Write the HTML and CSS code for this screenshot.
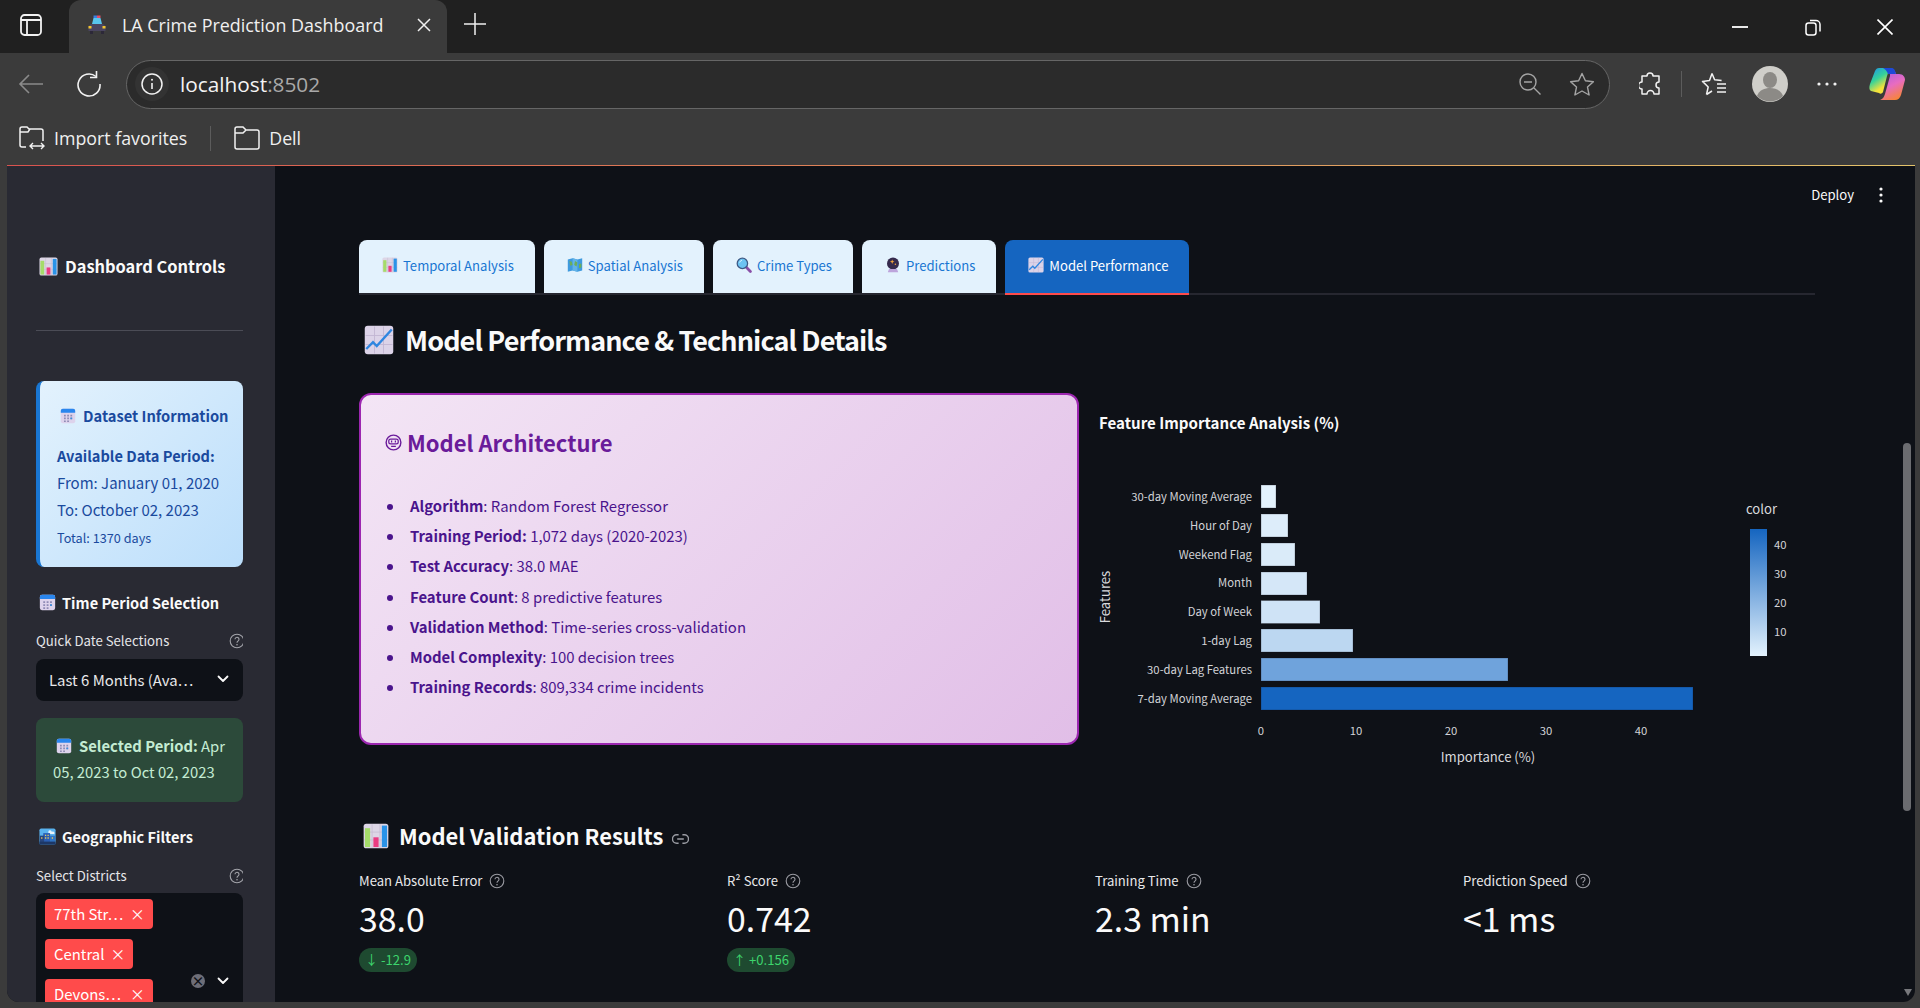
FILE: index.html
```html
<!DOCTYPE html>
<html lang="en">
<head>
  <meta charset="UTF-8">
  <title>LA Crime Prediction Dashboard</title>
  <link rel="stylesheet" href="styles.css">
</head>
<body>
  <!-- shared emoji drawings -->
  <svg class="defs" width="0" height="0">
    <symbol id="e-chart" viewBox="0 0 20 20">
      <rect x="0.5" y="0.5" width="19" height="19" rx="2" fill="#ddd6e6"/>
      <path d="M7 1v18M13 1v18M1 7h18M1 13h18" stroke="#c6bdd2" stroke-width=".6"/>
      <rect x="1.5" y="4" width="4" height="14.5" fill="#a5dc6a"/>
      <rect x="8" y="11" width="4" height="7.5" fill="#ea3c82"/>
      <rect x="14.5" y="2" width="4" height="16.5" fill="#2a93e8"/>
    </symbol>
    <symbol id="e-cal" viewBox="0 0 20 20">
      <rect x="1" y="1" width="18" height="18" rx="2.5" fill="#ddd3ec"/>
      <path d="M1 6V3.5A2.5 2.5 0 0 1 3.500 1h13A2.500 2.500 0 0 1 19 3.500V6z" fill="#2a86ee"/>
      <path d="M5 8.500h2.200v2H5zM9 8.500h2.200v2H9zM13 8.500h2.200v2H13zM5 12h2.200v2H5zM9 12h2.200v2H9zM13 12h2.200v2H13zM5 15.500h2.200v2H5zM9 15.500h2.200v2H9z" fill="#8f8bb5"/>
      <path d="M13 12h2.200v2H13z" fill="#3b8fe0"/>
    </symbol>
    <symbol id="e-city" viewBox="0 0 20 20">
      <rect x="0.500" y="0.500" width="19" height="19" rx="2" fill="#59b2ee"/>
      <path d="M11 5a2 2 0 0 1 4-.5 2 2 0 0 1 3 2.500h-7z" fill="#e6f3fb"/>
      <rect x="5" y="6" width="8" height="11" fill="#2b5fb5"/>
      <rect x="1" y="9" width="5" height="8" fill="#27467f"/>
      <rect x="13" y="9" width="6" height="8" fill="#2f74c4"/>
      <rect x="0.500" y="16" width="19" height="3.500" fill="#1d3766"/>
      <path d="M7 8h1.500v1.500H7zM10 8h1.500v1.500H10zM7 11h1.500v1.500H7zM10 11h1.500v1.500H10zM2.500 11H4v1.500H2.500zM15 11h1.500v1.500H15z" fill="#e7c95a"/>
    </symbol>
    <symbol id="e-map" viewBox="0 0 20 20">
      <path d="M1 3l6-1.500 6 1.500 6-1.500v15.500l-6 1.500-6-1.500-6 1.500z" fill="#3f9ade"/>
      <path d="M7 1.500v15.500l6 1.500V3z" fill="#62b3e8"/>
      <path d="M3 5l3 1 1 4-3 1zM10 5l3 2-1 5-3-2zM15 9l3-1v5l-3 1z" fill="#6cae5a"/>
    </symbol>
    <symbol id="e-search" viewBox="0 0 20 20">
      <path d="M12 12l6 6" stroke="#8a4fa8" stroke-width="3.500" stroke-linecap="round"/>
      <circle cx="8" cy="8" r="6.500" fill="#6cc3f2" stroke="#3d5a86" stroke-width="1.600"/>
      <path d="M4.500 7a4 4 0 0 1 3-3" stroke="#d8f1fd" stroke-width="1.200" fill="none"/>
    </symbol>
    <symbol id="e-ball" viewBox="0 0 20 20">
      <circle cx="10" cy="8" r="7.500" fill="#352a4d"/>
      <path d="M9 3l.8 2 2 .8-2 .8-.8 2-.8-2-2-.8 2-.8z" fill="#f2a33c"/>
      <circle cx="13" cy="9" r="1" fill="#f2a33c"/>
      <path d="M5 15h10l1.500 4h-13z" fill="#bda5dc"/>
    </symbol>
    <symbol id="e-line" viewBox="0 0 20 20">
      <rect x="0.500" y="0.500" width="19" height="19" rx="2" fill="#dcd3e8"/>
      <path d="M7 1v18M13 1v18M1 7h18M1 13h18" stroke="#c2b6d3" stroke-width=".6"/>
      <path d="M1.500 16l4.500-4.500 2.500 2.500 10-11" stroke="#2f86e0" stroke-width="1.600" fill="none"/>
    </symbol>
    <symbol id="i-help" viewBox="0 0 16 16">
      <circle cx="8" cy="8" r="6.800" fill="none" stroke="currentColor" stroke-width="1.100"/>
      <path d="M6 6.300a2 2 0 1 1 3.200 1.600c-.8.600-1.200 1-1.200 1.900" fill="none" stroke="currentColor" stroke-width="1.100"/>
      <circle cx="8" cy="11.700" r=".8" fill="currentColor"/>
    </symbol>
    <symbol id="i-chev" viewBox="0 0 12 8">
      <path d="M1.500 1.500L6 6l4.500-4.500" fill="none" stroke="currentColor" stroke-width="1.800" stroke-linecap="round" stroke-linejoin="round"/>
    </symbol>
  </svg>

  <!-- browser chrome -->
  <div class="tabstrip">
    <svg class="ic-panel" viewBox="0 0 22 22"><rect x="1" y="1" width="20" height="20" rx="3.500" fill="none" stroke="#f2f2f2" stroke-width="1.800"/><path d="M1 6h20M7 6v15" stroke="#f2f2f2" stroke-width="1.800"/></svg>
    <div class="browser-tab">
      <svg class="favicon" viewBox="0 0 20 20">
        <path d="M5 9l1.500-6h7L15 9z" fill="#59c6ee"/>
        <rect x="6.500" y="0.500" width="3.500" height="2.500" fill="#3b7fe0"/><rect x="10" y="0.500" width="3.500" height="2.500" fill="#e0506a"/>
        <path d="M1.500 11l2.500-2h12l2.500 2v5h-17z" fill="#4a4560"/>
        <rect x="1.500" y="11" width="3" height="2.500" fill="#f2c52e"/><rect x="15.500" y="11" width="3" height="2.500" fill="#f2c52e"/>
        <rect x="3" y="16" width="3" height="3" fill="#2c2838"/><rect x="14" y="16" width="3" height="3" fill="#2c2838"/>
      </svg>
      <span class="tab-title">LA Crime Prediction Dashboard</span>
      <svg class="tab-x" viewBox="0 0 14 14"><path d="M1 1l12 12M13 1L1 13" stroke="#f0f0f0" stroke-width="1.500"/></svg>
    </div>
    <svg class="ic-plus" viewBox="0 0 22 22"><path d="M11 0v22M0 11h22" stroke="#f0f0f0" stroke-width="1.500"/></svg>
    <div class="win-btns">
      <svg class="win-min" viewBox="0 0 16 2"><path d="M0 1h16" stroke="#fff" stroke-width="1.800"/></svg>
      <svg class="win-max" viewBox="0 0 16 18"><rect x="1" y="5" width="10" height="12" rx="2.500" fill="none" stroke="#fff" stroke-width="1.500"/><path d="M5 2.500h6a4 4 0 0 1 4 4v7" fill="none" stroke="#fff" stroke-width="1.500"/></svg>
      <svg class="win-close" viewBox="0 0 16 16"><path d="M.5.5l15 15M15.500.5l-15 15" stroke="#fff" stroke-width="1.600"/></svg>
    </div>
  </div>

  <div class="toolbar">
    <svg class="ic-back" viewBox="0 0 26 22"><path d="M25 11H2M11 2l-9 9 9 9" fill="none" stroke="#8b8b8b" stroke-width="1.600"/></svg>
    <svg class="ic-reload" viewBox="0 0 26 26"><path d="M20 5.500A11 11 0 1 0 24 13" fill="none" stroke="#f2f2f2" stroke-width="1.600"/><path d="M20.500 0v6.500H14" fill="none" stroke="#f2f2f2" stroke-width="1.600"/></svg>
    <div class="address">
      <span class="info-wrap"><svg class="ic-info" viewBox="0 0 22 22"><circle cx="11" cy="11" r="10" fill="none" stroke="#f2f2f2" stroke-width="1.500"/><path d="M11 10v6" stroke="#f2f2f2" stroke-width="1.600"/><circle cx="11" cy="6.800" r="1" fill="#f2f2f2"/></svg></span>
      <span class="url">localhost<span class="url-port">:8502</span></span>
      <svg class="ic-zoom" viewBox="0 0 22 22"><circle cx="9" cy="9" r="8" fill="none" stroke="#a5a5a5" stroke-width="1.400"/><path d="M5 9h8M15 15l6.500 6.500" stroke="#a5a5a5" stroke-width="1.400"/></svg>
      <svg class="ic-star" viewBox="0 0 26 24"><path d="M13 1.500l3.400 7.300 8 .9-5.900 5.400 1.600 7.900-7.100-4-7.100 4 1.600-7.900L1.600 9.700l8-.9z" fill="none" stroke="#a5a5a5" stroke-width="1.400" stroke-linejoin="round"/></svg>
    </div>
    <svg class="ic-ext" viewBox="0 0 22 24"><path d="M8 4a3 3 0 0 1 6 0h6v6a3 3 0 0 0 0 6v6h-5a3.500 3.500 0 0 0-7 0H3v-5a3 3 0 0 1 0-7V4z" fill="none" stroke="#f2f2f2" stroke-width="1.500" stroke-linejoin="round"/></svg>
    <span class="tool-sep"></span>
    <svg class="ic-favs" viewBox="0 0 26 24"><path d="M11 1.500l2.600 6.300 7 .7M5.500 22.500L7.200 15 1.500 9.400l7-.9L11 1.500M5.500 22.500l5.500-3.500" fill="none" stroke="#f2f2f2" stroke-width="1.500" stroke-linejoin="round"/><path d="M16 12h9M16 16h9M16 20h9" stroke="#f2f2f2" stroke-width="1.500"/></svg>
    <svg class="ic-avatar" viewBox="0 0 36 36"><circle cx="18" cy="18" r="18" fill="#cfcec9"/><ellipse cx="18" cy="14" rx="7" ry="8" fill="#8c8a86"/><path d="M5 30c2-6 8-8 13-8s11 2 13 8a18 18 0 0 1-26 0z" fill="#8c8a86"/></svg>
    <svg class="ic-dots" viewBox="0 0 20 4"><circle cx="2" cy="2" r="1.600" fill="#f2f2f2"/><circle cx="10" cy="2" r="1.600" fill="#f2f2f2"/><circle cx="18" cy="2" r="1.600" fill="#f2f2f2"/></svg>
    <svg class="ic-copilot" viewBox="0 0 36 32">
      <defs>
        <linearGradient id="cp1" x1="0" y1="0" x2="0.600" y2="1"><stop offset="0" stop-color="#1b8ef0"/><stop offset=".45" stop-color="#35d29a"/><stop offset=".8" stop-color="#f4e23a"/></linearGradient>
        <linearGradient id="cp2" x1="0.200" y1="0" x2="0.600" y2="1"><stop offset="0" stop-color="#a35be8"/><stop offset=".55" stop-color="#e86cc0"/><stop offset="1" stop-color="#f7843a"/></linearGradient>
      </defs>
      <path d="M10 0h14c-3 1-5 4-6 8l-4 16c-1 2-3 2-4 1l-8-2C0 22 0 19 1 16L6 3c1-2 2-3 4-3z" fill="url(#cp1)"/>
      <path d="M22 1c3 0 4 2 5 5h3c4 0 6 3 6 6l-4 15c-1 3-3 5-6 5H11c3-1 4-3 5-6l5-18c0-3 0-6 1-7z" fill="url(#cp2)"/>
      <path d="M14 0h9c2 0 3 2 4 6h-8c-1-3-3-5-5-6z" fill="#1e49d8"/>
    </svg>
  </div>

  <div class="bookmarks">
    <svg class="ic-import" viewBox="0 0 26 24"><path d="M7 21H3a2 2 0 0 1-2-2V3a2 2 0 0 1 2-2h5l2 2h12a2 2 0 0 1 2 2v10" fill="none" stroke="#f2f2f2" stroke-width="1.500"/><path d="M1 6h8l2-3M11 20h14M14 17l-3 3 3 3M22 17l3 3-3 3" fill="none" stroke="#f2f2f2" stroke-width="1.400"/></svg>
    <span class="bm-label">Import favorites</span>
    <span class="bm-sep"></span>
    <svg class="ic-folder" viewBox="0 0 26 24"><path d="M3 1h6l3 3h11a2 2 0 0 1 2 2v15a2 2 0 0 1-2 2H3a2 2 0 0 1-2-2V3a2 2 0 0 1 2-2zM1 7h8l3-3" fill="none" stroke="#f2f2f2" stroke-width="1.500"/></svg>
    <span class="bm-label">Dell</span>
  </div>

  <!-- streamlit page -->
  <div class="page">
    <aside class="sidebar">
      <div class="side-inner">
        <h3 class="side-title"><svg class="emoji e19"><use href="#e-chart"/></svg>Dashboard Controls</h3>
        <hr class="side-hr">
        <div class="data-card">
          <div class="data-head"><svg class="emoji e16"><use href="#e-cal"/></svg>Dataset Information</div>
          <div class="data-line"><strong>Available Data Period:</strong></div>
          <div class="data-line">From: January 01, 2020</div>
          <div class="data-line">To: October 02, 2023</div>
          <div class="data-line data-small">Total: 1370 days</div>
        </div>

        <h4 class="side-sub first"><svg class="emoji e17"><use href="#e-cal"/></svg>Time Period Selection</h4>
        <div class="field-label">Quick Date Selections<svg class="help-clip"><use href="#i-help"/></svg></div>
        <div class="select-box">
          <span>Last 6 Months (Ava…</span>
          <svg class="chev"><use href="#i-chev"/></svg>
        </div>
        <div class="period-box">
          <svg class="emoji e16 period-ic"><use href="#e-cal"/></svg><strong>Selected Period:</strong> Apr 05, 2023 to Oct 02, 2023
        </div>

        <h4 class="side-sub geo"><svg class="emoji e17"><use href="#e-city"/></svg>Geographic Filters</h4>
        <div class="field-label">Select Districts<svg class="help-clip"><use href="#i-help"/></svg></div>
        <div class="multi-box">
          <div class="tags">
            <span class="tag wide">77th Str…<i>×</i></span>
            <span class="tag">Central<i>×</i></span>
            <span class="tag wide">Devons…<i>×</i></span>
          </div>
          <div class="multi-ctl">
            <span class="clear-x">×</span>
            <svg class="chev"><use href="#i-chev"/></svg>
          </div>
        </div>
      </div>
    </aside>

    <main class="main">
      <div class="app-head">
        <span>Deploy</span>
        <svg class="kebab" viewBox="0 0 4 16"><circle cx="2" cy="2" r="1.600" fill="#fafafa"/><circle cx="2" cy="8" r="1.600" fill="#fafafa"/><circle cx="2" cy="14" r="1.600" fill="#fafafa"/></svg>
      </div>

      <div class="tabs">
        <div class="tab"><svg class="emoji e16"><use href="#e-chart"/></svg>Temporal Analysis</div>
        <div class="tab"><svg class="emoji e16"><use href="#e-map"/></svg>Spatial Analysis</div>
        <div class="tab"><svg class="emoji e16"><use href="#e-search"/></svg>Crime Types</div>
        <div class="tab"><svg class="emoji e16"><use href="#e-ball"/></svg>Predictions</div>
        <div class="tab active"><svg class="emoji e16"><use href="#e-line"/></svg>Model Performance</div>
      </div>

      <h2 class="page-title"><svg class="emoji e30"><use href="#e-line"/></svg>Model Performance &amp; Technical Details</h2>

      <div class="two-col">
        <section class="arch-card">
          <h3>
            <svg class="robot" viewBox="0 0 18 18"><circle cx="9" cy="9" r="7.800" fill="none" stroke="#6a1b9a" stroke-width="1.500"/><rect x="4" y="5.500" width="10" height="5" rx="2" fill="none" stroke="#6a1b9a" stroke-width="1.300"/><path d="M7 7v2M11 7v2M6.500 13h5" stroke="#6a1b9a" stroke-width="1.300"/></svg>Model Architecture
          </h3>
          <ul>
            <li><strong>Algorithm</strong>: Random Forest Regressor</li>
            <li><strong>Training Period:</strong> 1,072 days (2020-2023)</li>
            <li><strong>Test Accuracy</strong>: 38.0 MAE</li>
            <li><strong>Feature Count</strong>: 8 predictive features</li>
            <li><strong>Validation Method</strong>: Time-series cross-validation</li>
            <li><strong>Model Complexity</strong>: 100 decision trees</li>
            <li><strong>Training Records</strong>: 809,334 crime incidents</li>
          </ul>
        </section>

        <svg class="chart" viewBox="1099 393 716 400">
          <defs>
            <linearGradient id="cbar" x1="0" y1="0" x2="0" y2="1"><stop offset="0" stop-color="#1565c0"/><stop offset="1" stop-color="#e3f2fd"/></linearGradient>
          </defs>
          <text class="c-title" x="1099" y="429">Feature Importance Analysis (%)</text>

          <g class="c-bars">
            <rect x="1261" y="485" width="15" height="23" fill="#e3f2fd"/>
            <rect x="1261" y="514" width="27" height="23" fill="#ddedfa"/>
            <rect x="1261" y="543" width="34" height="23" fill="#daebf9"/>
            <rect x="1261" y="572" width="46" height="23" fill="#d5e7f8"/>
            <rect x="1261" y="600.500" width="59" height="23" fill="#cfe3f6"/>
            <rect x="1261" y="629" width="92" height="23" fill="#bcd7f1"/>
            <rect x="1261" y="658" width="247" height="23" fill="#6fa3dc"/>
            <rect x="1261" y="687" width="432" height="23" fill="#1565c0"/>
          </g>

          <g class="c-tick" text-anchor="end">
            <text x="1252" y="501">30-day Moving Average</text>
            <text x="1252" y="530">Hour of Day</text>
            <text x="1252" y="559">Weekend Flag</text>
            <text x="1252" y="587">Month</text>
            <text x="1252" y="616">Day of Week</text>
            <text x="1252" y="645">1-day Lag</text>
            <text x="1252" y="674">30-day Lag Features</text>
            <text x="1252" y="703">7-day Moving Average</text>
          </g>
          <g class="c-tick" text-anchor="middle">
            <text x="1261" y="735">0</text>
            <text x="1356" y="735">10</text>
            <text x="1451" y="735">20</text>
            <text x="1546" y="735">30</text>
            <text x="1641" y="735">40</text>
          </g>
          <text class="c-axis" x="1488" y="762" text-anchor="middle">Importance (%)</text>
          <text class="c-axis" x="0" y="0" text-anchor="middle" transform="translate(1110 597) rotate(-90)">Features</text>

          <text class="c-axis" x="1746" y="514">color</text>
          <rect x="1750" y="529" width="17" height="127" fill="url(#cbar)"/>
          <g class="c-tick">
            <text x="1774" y="549">40</text>
            <text x="1774" y="578">30</text>
            <text x="1774" y="607">20</text>
            <text x="1774" y="636">10</text>
          </g>
        </svg>
      </div>

      <h3 class="section-title"><svg class="emoji e26"><use href="#e-chart"/></svg>Model Validation Results
        <svg class="ic-link" viewBox="0 0 18 12"><path d="M7 1.500H5a4.500 4.500 0 0 0 0 9h2M11 1.500h2a4.500 4.500 0 0 1 0 9h-2M5.500 6h7" fill="none" stroke="#9a9ca3" stroke-width="1.500"/></svg>
      </h3>

      <div class="metrics">
        <div class="metric">
          <div class="metric-label">Mean Absolute Error<svg class="help"><use href="#i-help"/></svg></div>
          <div class="metric-value">38.0</div>
          <span class="delta">↓ -12.9</span>
        </div>
        <div class="metric">
          <div class="metric-label">R² Score<svg class="help"><use href="#i-help"/></svg></div>
          <div class="metric-value">0.742</div>
          <span class="delta">↑ +0.156</span>
        </div>
        <div class="metric">
          <div class="metric-label">Training Time<svg class="help"><use href="#i-help"/></svg></div>
          <div class="metric-value">2.3 min</div>
        </div>
        <div class="metric">
          <div class="metric-label">Prediction Speed<svg class="help"><use href="#i-help"/></svg></div>
          <div class="metric-value">&lt;1 ms</div>
        </div>
      </div>

      <div class="scrollbar">
        <span class="scroll-thumb"></span>
        <svg class="scroll-arrow" viewBox="0 0 8 7"><path d="M0 0h8L4 7z" fill="#77787c"/></svg>
      </div>
    </main>
  </div>
</body>
</html>
```

FILE: styles.css
```css
* {
  box-sizing: border-box;
}
html, body {
  margin: 0;
  height: 1008px;
  overflow: hidden;
}
body {
  background: #3b3b3b;
  font-family: "Noto Sans CJK SC", "Noto Sans", sans-serif;
  color: #fafafa;
  display: flex;
  flex-direction: column;
}
svg {
  display: block;
  flex: none;
}
.defs {
  position: absolute;
}

/* browser chrome */
.tabstrip {
  height: 53px;
  background: #202020;
  display: flex;
  align-items: flex-start;
  flex: none;
}
.ic-panel {
  width: 22px;
  height: 22px;
  margin: 14px 27px 0 20px;
}
.browser-tab {
  width: 378px;
  height: 53px;
  background: #3b3b3b;
  border-radius: 12px 12px 0 0;
  display: flex;
  align-items: center;
  padding: 0 0 4px 18px;
}
.favicon {
  width: 20px;
  height: 20px;
}
.tab-title {
  font-family: "Open Sans", sans-serif;
  font-size: 17.900px;
  color: #f0f0f0;
  margin-left: 15px;
  width: 295px;
  white-space: nowrap;
}
.tab-x {
  width: 14px;
  height: 14px;
}
.ic-plus {
  width: 22px;
  height: 22px;
  margin: 13px 0 0 17px;
}
.win-btns {
  margin-left: auto;
  display: flex;
  align-items: center;
  height: 54px;
}
.win-min {
  width: 16px;
  height: 2px;
}
.win-max {
  width: 16px;
  height: 18px;
  margin-left: 57px;
}
.win-close {
  width: 16px;
  height: 16px;
  margin: 0 27px 0 56px;
}
.toolbar {
  height: 62px;
  flex: none;
  display: flex;
  align-items: center;
  padding-bottom: 0;
}
.ic-back {
  width: 26px;
  height: 22px;
  margin-left: 18px;
}
.ic-reload {
  width: 26px;
  height: 26px;
  margin-left: 32px;
}
.address {
  width: 1484px;
  height: 49px;
  margin-left: 24px;
  border: 1.500px solid #666;
  border-radius: 25px;
  background: #2b2b2b;
  display: flex;
  align-items: center;
  padding-left: 8px;
}
.info-wrap {
  width: 34px;
  height: 34px;
  border-radius: 50%;
  background: #333;
  display: flex;
  align-items: center;
  justify-content: center;
}
.ic-info {
  width: 22px;
  height: 22px;
}
.url {
  font-family: "Open Sans", sans-serif;
  font-size: 20.800px;
  color: #f4f4f4;
  margin-left: 11px;
}
.url-port {
  color: #a9a9a9;
}
.ic-zoom {
  width: 22px;
  height: 22px;
  margin-left: auto;
}
.ic-star {
  width: 26px;
  height: 24px;
  margin: 0 14px 0 28px;
}
.ic-ext {
  width: 22px;
  height: 24px;
  margin-left: 29px;
}
.tool-sep {
  width: 1px;
  height: 26px;
  background: #5c5c5c;
  margin-left: 20px;
}
.ic-favs {
  width: 26px;
  height: 24px;
  margin-left: 19px;
}
.ic-avatar {
  width: 36px;
  height: 36px;
  margin-left: 25px;
}
.ic-dots {
  width: 20px;
  height: 4px;
  margin-left: 29px;
}
.ic-copilot {
  width: 36px;
  height: 32px;
  margin-left: 32px;
}
.bookmarks {
  height: 50px;
  flex: none;
  display: flex;
  align-items: center;
  padding-left: 19px;
  padding-bottom: 4px;
}
.ic-import {
  width: 26px;
  height: 24px;
}
.bm-label {
  font-family: "Open Sans", sans-serif;
  font-size: 17.800px;
  color: #f0f0f0;
  margin-left: 9px;
}
.bm-sep {
  width: 1px;
  height: 25px;
  background: #5c5c5c;
  margin: 0 23px;
}
.ic-folder {
  width: 26px;
  height: 24px;
}

/* page */
.page {
  height: 837px;
  flex: none;
  margin: 0 5px 0 7px;
  border-top: 1px solid;
  border-image: linear-gradient(90deg, #d9534f, #e08a5a 50%, #e3c36b) 1;
  display: flex;
  overflow: hidden;
  border-radius: 0 0 12px 12px;
  background: #0e1117;
}
.sidebar {
  width: 268px;
  flex: none;
  background: #292a33;
  padding: 88px 0 0 29px;
  overflow: hidden;
}
.side-inner {
  width: 207px;
  overflow: hidden;
}
.emoji {
  display: inline-block;
  vertical-align: -2px;
}
.e16 { width: 16px; height: 16px; }
.e17 { width: 17px; height: 17px; }
.e19 { width: 19px; height: 19px; }
.e26 { width: 26px; height: 26px; }
.e30 { width: 30px; height: 30px; }
.side-title {
  margin: 0;
  font-size: 16.400px;
  line-height: 24px;
  font-weight: 600;
  white-space: nowrap;
  padding-left: 3px;
}
.side-title .emoji {
  margin-right: 7px;
  vertical-align: -3px;
}
.side-hr {
  border: 0;
  height: 1px;
  background: #4b4c56;
  margin: 52px 0 50px;
}
.data-card {
  height: 186px;
  border-left: 4px solid #1976d2;
  border-radius: 8px;
  background: linear-gradient(135deg, #e3f2fd, #bbdefb);
  padding: 23px 0 0 17px;
  color: #1a4a9e;
  font-size: 15px;
  white-space: nowrap;
}
.data-head {
  line-height: 24px;
  font-weight: 600;
  font-size: 14.700px;
  margin-left: 3px;
  margin-bottom: 14px;
}
.data-head .emoji {
  margin-right: 7px;
}
.data-line {
  line-height: 27px;
}
.data-line strong {
  font-weight: 600;
  font-size: 14.600px;
}
.data-small {
  font-size: 12.700px;
  line-height: 29px;
}
.side-sub {
  margin: 0;
  font-size: 14.600px;
  line-height: 24px;
  font-weight: 600;
  padding-left: 3px;
  white-space: nowrap;
}
.side-sub .emoji {
  margin-right: 6px;
}
.side-sub.first {
  margin-top: 24px;
}
.side-sub.geo {
  margin-top: 23px;
}
.field-label {
  font-size: 13.200px;
  line-height: 20px;
  margin-top: 16px;
  display: flex;
  justify-content: space-between;
  align-items: center;
  color: #e6e6e9;
}
.side-sub.geo + .field-label {
  margin-top: 17px;
}
.help-clip {
  width: 16px;
  height: 16px;
  margin-right: -2px;
  color: #a3a4aa;
}
.select-box {
  height: 42px;
  margin-top: 8px;
  background: #0e1117;
  border-radius: 8px;
  padding: 0 14px 2px 13px;
  font-size: 14.900px;
  color: #e8e8ea;
  display: flex;
  align-items: center;
  justify-content: space-between;
  white-space: nowrap;
}
.chev {
  width: 12px;
  height: 8px;
  color: #fafafa;
}
.period-box {
  height: 84px;
  margin-top: 17px;
  padding: 15px 8px 0 17px;
  background: #2c4a3a;
  border-radius: 8px;
  color: #c4ecd3;
  font-size: 14.800px;
  line-height: 26px;
}
.period-box strong {
  font-weight: 600;
}
.period-ic {
  margin: 0 7px 0 3px;
}
.multi-box {
  height: 130px;
  margin-top: 7px;
  background: #0e1117;
  border-radius: 8px;
  padding: 6px 14px 0 9px;
  display: flex;
  justify-content: space-between;
}
.tags {
  display: flex;
  flex-direction: column;
  align-items: flex-start;
  gap: 10px;
}
.tag {
  height: 30px;
  background: #ff4b4b;
  border-radius: 4px;
  color: #fff;
  font-size: 14.900px;
  line-height: 30px;
  padding: 0 8px 0 9px;
  white-space: nowrap;
  display: flex;
  justify-content: space-between;
}
.tag i {
  font-style: normal;
  margin-left: 6px;
}
.tag.wide {
  width: 108px;
}
.multi-ctl {
  display: flex;
  align-items: center;
  gap: 12px;
  height: 164px;
}
.clear-x {
  width: 14px;
  height: 14px;
  border-radius: 50%;
  background: #6d6e78;
  color: #0e1117;
  font-size: 13px;
  line-height: 14px;
  text-align: center;
  font-weight: 700;
}

.main {
  flex: 1;
  position: relative;
  padding: 74px 100px 0 84px;
  overflow: hidden;
  min-width: 0;
}
.app-head {
  position: absolute;
  top: 19px;
  right: 32px;
  display: flex;
  align-items: center;
  gap: 25px;
  font-size: 13.100px;
  line-height: 20px;
}
.kebab {
  width: 4px;
  height: 16px;
}
.tabs {
  display: flex;
  gap: 9px;
  border-bottom: 2px solid #262730;
  height: 55px;
}
.tab {
  height: 55px;
  background: #e3f2fd;
  color: #1976d2;
  border-radius: 8px 8px 0 0;
  border-bottom: 2px solid #262730;
  padding: 0 21px 3px 23px;
  font-size: 13.100px;
  display: flex;
  align-items: center;
  white-space: nowrap;
}
.tab .emoji {
  margin-right: 5px;
}
.tab.active {
  background: #1565c0;
  color: #fff;
  border-bottom-color: #ff4b4b;
}
.page-title {
  margin: 25px 0 0 5px;
  font-size: 27px;
  letter-spacing: -.9px;
  line-height: 40px;
  font-weight: 600;
  display: flex;
  align-items: center;
  gap: 11px;
  white-space: nowrap;
}
.two-col {
  display: flex;
  gap: 20px;
  margin-top: 33px;
}
.arch-card {
  width: 720px;
  height: 352px;
  flex: none;
  border: 2px solid #9c27b0;
  border-radius: 12px;
  background: linear-gradient(135deg, #f3e5f5, #e1bee7);
  padding: 31px 0 0 24px;
  color: #4a148c;
}
.arch-card h3 {
  margin: 0;
  font-size: 22px;
  line-height: 32px;
  font-weight: 600;
  color: #6a1b9a;
  display: flex;
  align-items: center;
  gap: 5px;
}
.robot {
  width: 17px;
  height: 17px;
}
.arch-card ul {
  margin: 36px 0 0;
  padding-left: 25px;
  list-style: none;
  font-size: 14.900px;
  line-height: 24px;
}
.arch-card li {
  margin-bottom: 6.200px;
}
.arch-card li::before {
  content: "";
  display: inline-block;
  width: 6px;
  height: 6px;
  border-radius: 50%;
  background: currentColor;
  margin: 0 17px 2px -23px;
}
.arch-card strong {
  font-weight: 600;
}
.chart {
  width: 716px;
  height: 400px;
  flex: none;
  font-family: "Noto Sans CJK SC", "Noto Sans", sans-serif;
}
.c-title {
  font-size: 15.100px;
  font-weight: 700;
  fill: #fafafa;
}
.c-bars rect {
  stroke: #0e1117;
  stroke-opacity: .25;
}
.c-tick {
  font-size: 11.300px;
  fill: #d3d4d8;
}
.c-axis {
  font-size: 13.100px;
  fill: #d9dadd;
}
.section-title {
  margin: 27px 0 0 4px;
  font-size: 21.900px;
  line-height: 32px;
  font-weight: 600;
  display: flex;
  align-items: center;
  gap: 10px;
  white-space: nowrap;
}
.ic-link {
  width: 17px;
  height: 12px;
  margin: 5px 0 0 -1px;
}
.metrics {
  display: grid;
  grid-template-columns: repeat(4, 368px);
  margin-top: 19px;
}
.metric-label {
  font-size: 13.100px;
  line-height: 20px;
  display: flex;
  align-items: center;
  gap: 7px;
  color: #e8e8ea;
}
.help {
  width: 16px;
  height: 16px;
  color: #9a9ba2;
}
.metric-value {
  margin-top: 2px;
  font-size: 33.800px;
  line-height: 50px;
  font-weight: 400;
}
.delta {
  display: inline-block;
  margin-top: 5px;
  height: 24px;
  padding: 0 6px;
  border-radius: 12px;
  background: #1e4a30;
  color: #3dd56d;
  font-size: 13.100px;
  line-height: 24px;
  white-space: nowrap;
}
.scrollbar {
  position: absolute;
  top: 0;
  right: 0;
  bottom: 0;
  width: 12px;
}
.scroll-thumb {
  position: absolute;
  top: 277px;
  left: 0;
  width: 8px;
  height: 368px;
  border-radius: 4px;
  background: #6b6c70;
}
.scroll-arrow {
  position: absolute;
  bottom: 6px;
  left: 1px;
  width: 8px;
  height: 7px;
}
```
